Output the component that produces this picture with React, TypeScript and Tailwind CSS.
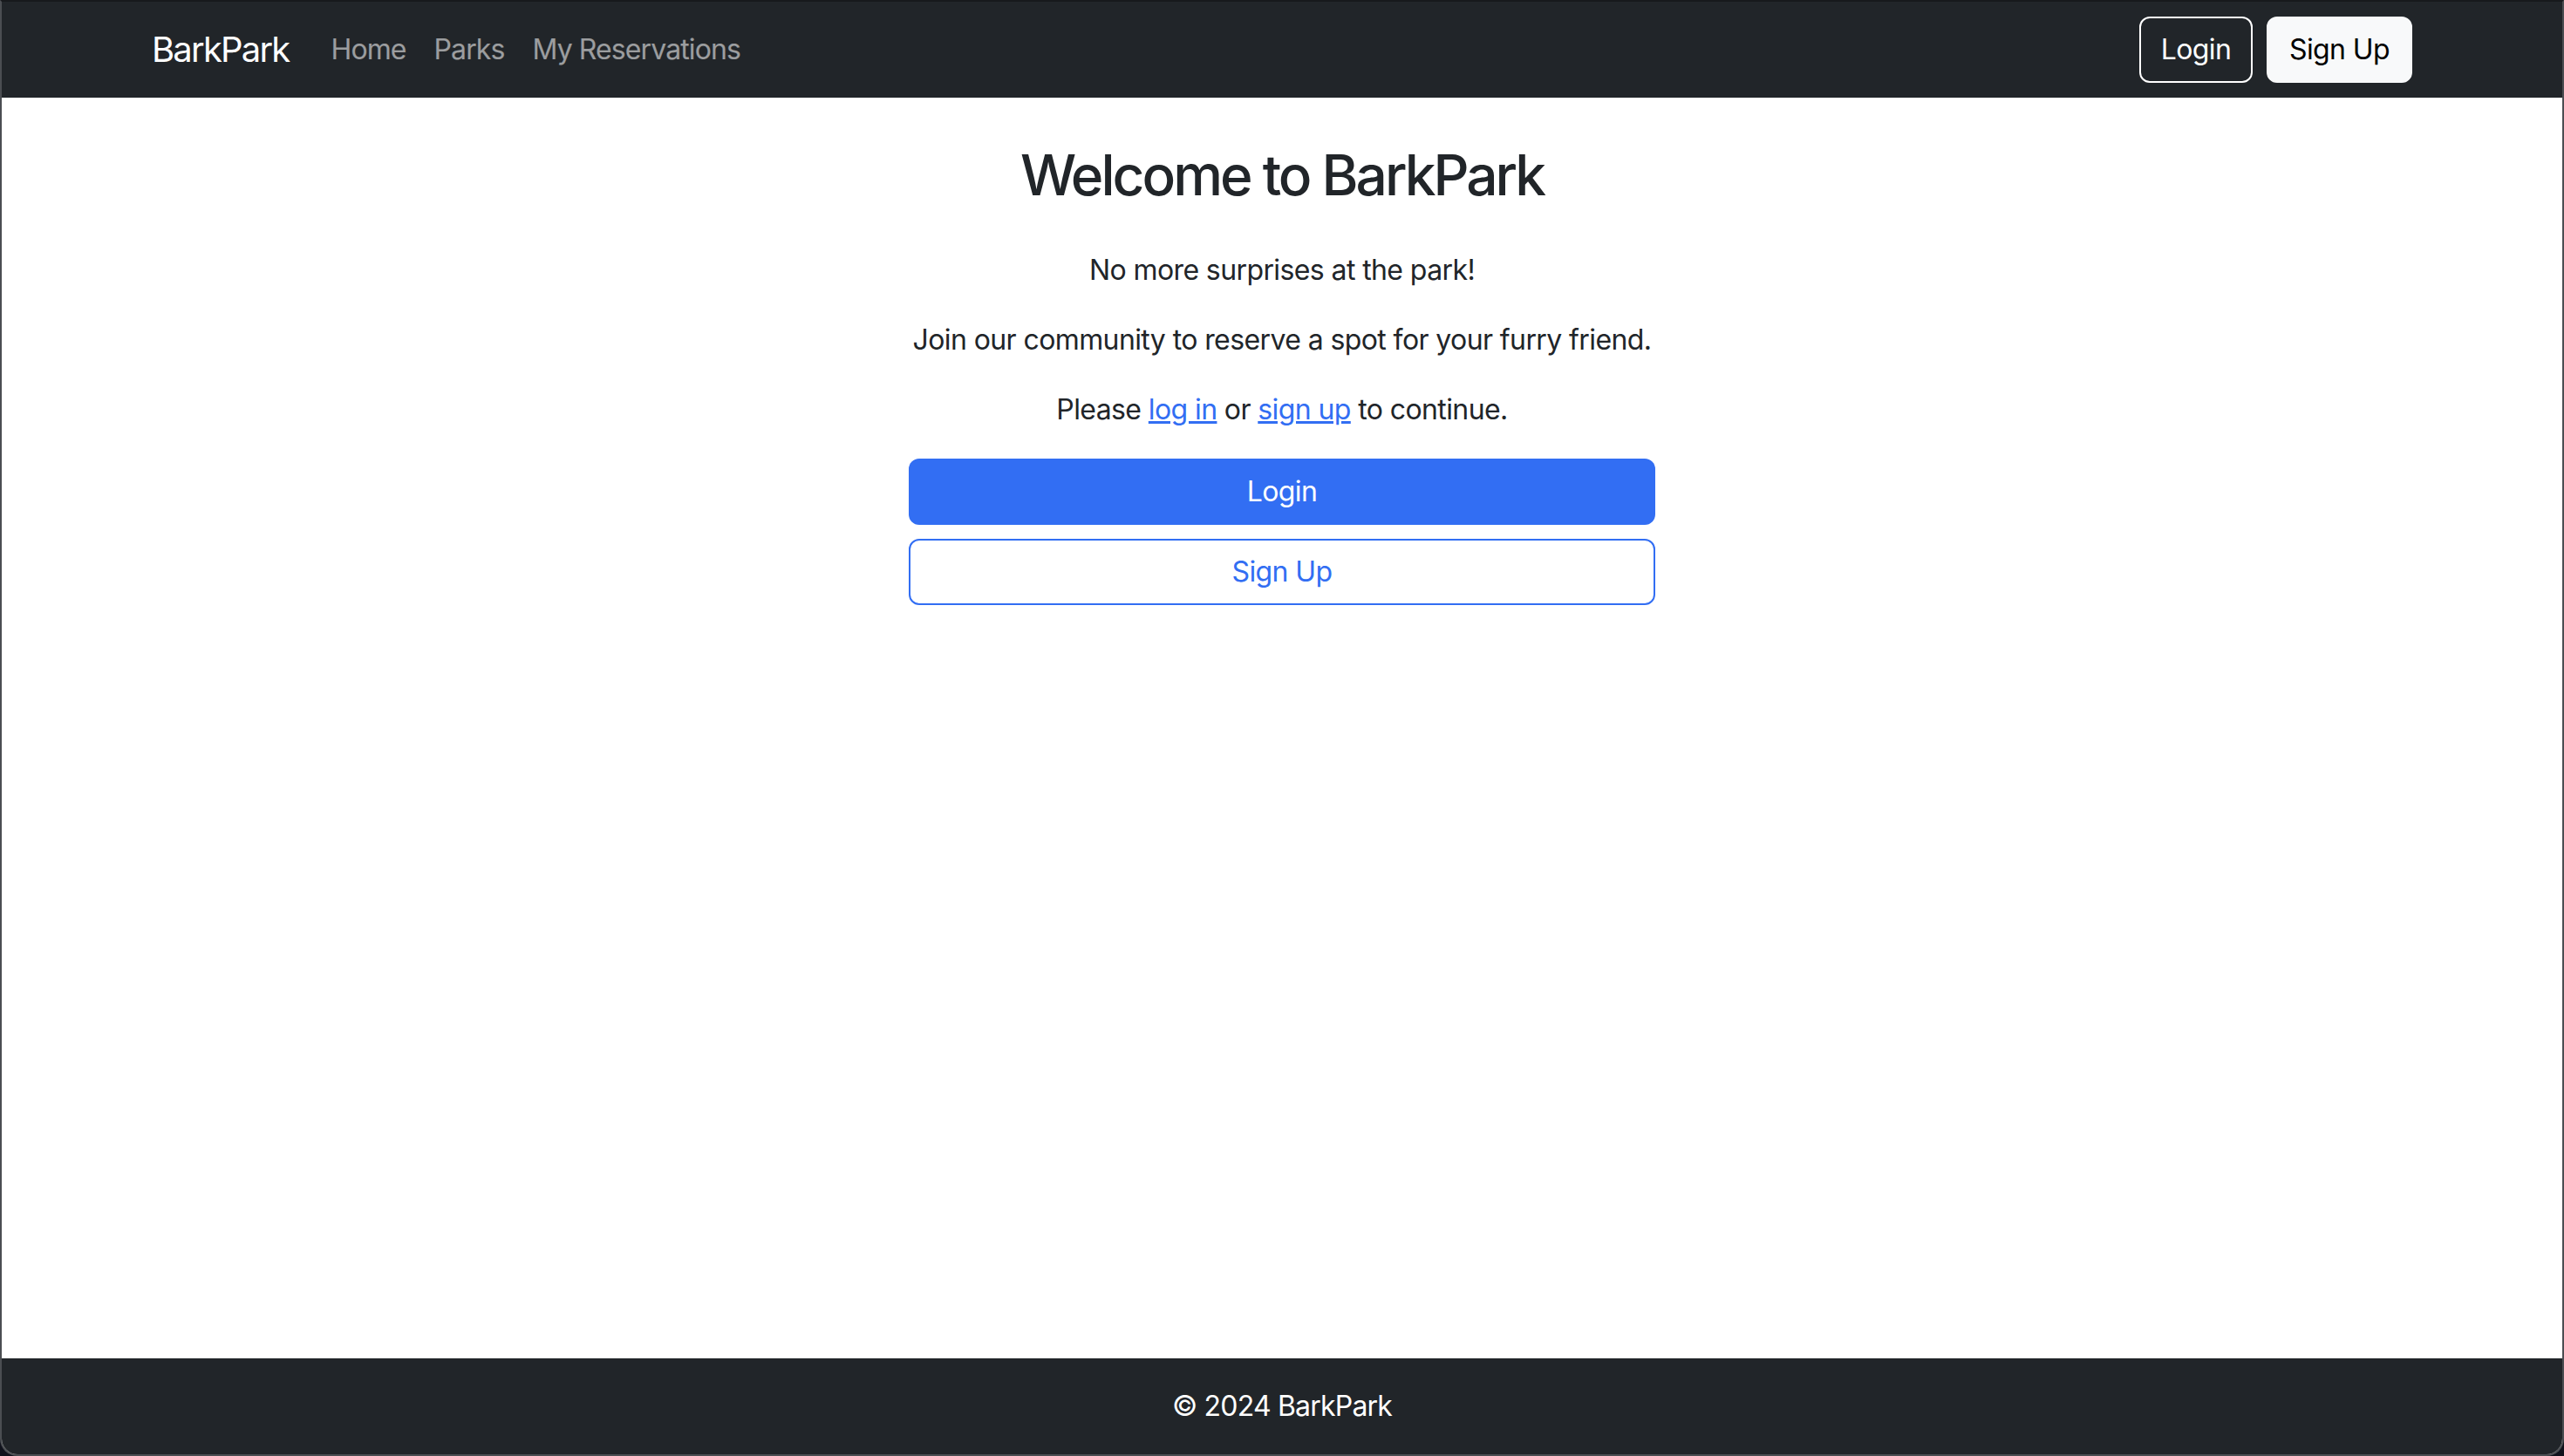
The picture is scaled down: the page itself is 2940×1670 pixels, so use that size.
export default function App() {
    return (
        <div className="h-[1670px] w-full bg-[#10121c] font-['Inter','Liberation_Sans',sans-serif]">
            <div className="flex h-full flex-col overflow-hidden rounded-b-[20px] border-2 border-x-[#4b4e52] border-b-[#4b4e52] border-t-[#17191c] bg-white">
                {/* navbar */}
                <nav className="h-[110px] shrink-0 bg-[#212529]">
                    <div className="mx-auto flex h-full w-[2640px] items-center px-[24px]">
                        <a className="mr-[32px] text-[40px] leading-[60px] tracking-[-1.8px] text-white">BarkPark</a>
                        <a className="px-[16px] text-[32px] leading-[48px] tracking-[-0.9px] text-white/55">Home</a>
                        <a className="px-[16px] text-[32px] leading-[48px] tracking-[-0.9px] text-white/55">Parks</a>
                        <a className="px-[16px] text-[32px] leading-[48px] tracking-[-0.9px] text-white/55">
                            My Reservations
                        </a>
                        <div className="ml-auto flex gap-[16px]">
                            <button className="h-[76px] w-[130px] rounded-[12px] border-2 border-white text-[32px] tracking-[-0.6px] text-white">
                                Login
                            </button>
                            <button className="h-[76px] w-[167px] rounded-[12px] border-2 border-[#f8f9fa] bg-[#f8f9fa] text-[32px] tracking-[-0.6px] text-black">
                                Sign Up
                            </button>
                        </div>
                    </div>
                </nav>

                {/* main */}
                <main className="flex flex-1 flex-col items-center pt-[50px] text-center text-[#212529]">
                    <h1 className="mb-[47px] text-[64px] font-medium leading-[77px] tracking-[-3px]">
                        Welcome to BarkPark
                    </h1>
                    <div className="text-[32px] leading-[48px] tracking-[-0.6px]">
                        <p className="mb-[32px]">No more surprises at the park!</p>
                        <p className="mb-[32px]">Join our community to reserve a spot for your furry friend.</p>
                        <p className="mb-[32px]">
                            Please <a className="text-[#326ef3] underline">log in</a> or{" "}
                            <a className="text-[#326ef3] underline">sign up</a> to continue.
                        </p>
                    </div>
                    <div className="flex w-[856px] flex-col gap-[16px] text-[32px] tracking-[-0.6px]">
                        <button className="h-[76px] rounded-[12px] bg-[#326ef3] text-white">Login</button>
                        <button className="h-[76px] rounded-[12px] border-2 border-[#326ef3] text-[#326ef3]">Sign Up</button>
                    </div>
                </main>

                {/* footer */}
                <footer className="flex h-[110px] shrink-0 items-center justify-center bg-[#212529] text-[32px] tracking-[-0.8px] text-white">
                    © 2024 BarkPark
                </footer>
            </div>
        </div>
    )
}
